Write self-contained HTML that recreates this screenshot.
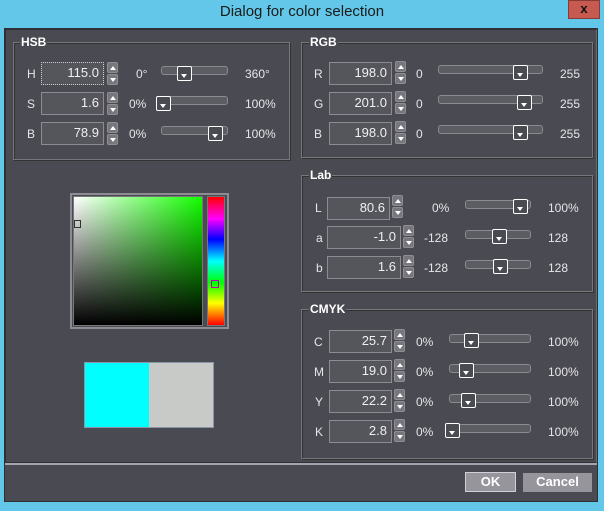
<!DOCTYPE html>
<html><head><meta charset="utf-8"><style>
*{margin:0;padding:0;box-sizing:border-box}
body{width:604px;height:511px;background:#62c7e8;position:relative;overflow:hidden;font-family:"Liberation Sans",sans-serif;font-size:12px;color:#e6e6ea}
div,span{position:absolute}
.title{left:0;top:3px;width:604px;text-align:center;font-size:15px;color:#1b1b1b}
.close{left:568px;top:0;width:32px;height:19px;background:#c75a50;border:1px solid #8a3a34;color:#111;font-weight:bold;font-size:13px;text-align:center;line-height:16px}
.win{left:4px;top:28px;width:594px;height:474px;background:#4a4a52;border:1px solid #2e2e33}
.pan{left:5px;top:29px;width:592px;height:434px;border:1px solid #2f2f34;border-right-color:#6a6a70}
.sep{left:5px;top:463px;width:592px;height:2px;background:#a4a4b0}
.grp{border:1px solid #76767c;box-shadow:inset 1px 1px 0 #333,1px 1px 0 #333}
.gt{font-weight:bold;color:#fff;background:#4a4a52;padding:0 1px;font-size:12px}
.l{width:12px}
.in{height:23px;border:1px solid #8c8c92;background:#55555c;text-align:right;padding-right:4px;line-height:20px;font-size:13px;color:#f0f0f0}
.sp{width:11px;height:11px;background:#76767c;border:1px solid #8e8e94;border-radius:2px}
.sp:after{content:"";position:absolute;left:2px;width:0;height:0;border-left:3px solid transparent;border-right:3px solid transparent}
.up:after{top:3px;border-bottom:4px solid #fff}
.dn:after{top:3px;border-top:4px solid #fff}
.tr{height:9px;background:#5c5c63;border:1px solid #8a8a90;border-radius:3px}
.th{width:15px;height:15px;border:1.5px solid #fff;border-radius:2px;background:#4a4a52}
.th:after{content:"";position:absolute;left:3px;top:7px;border-left:3.5px solid transparent;border-right:3.5px solid transparent;border-top:4px solid #fff}
.t{font-size:12px;line-height:14px}
.btn{height:20px;background:#95959b;color:#fff;font-weight:bold;text-align:center;line-height:18px;font-size:13px}
</style></head><body>
<div class="title">Dialog for color selection</div>
<div class="close">x</div>
<div class="win"></div>
<div class="pan"></div>
<div class="sep"></div>

<!-- HSB -->
<div class="grp" style="left:13px;top:42px;width:277px;height:118px"></div>
<div class="gt" style="left:20px;top:35px">HSB</div>
<span class="t" style="left:27px;top:67px">H</span>
<div class="in" style="left:41px;top:62px;width:63px;border:1px dotted #ccc">115.0</div>
<div class="sp up" style="left:107px;top:62px"></div><div class="sp dn" style="left:107px;top:74px"></div>
<span class="t" style="left:136px;top:67px">0°</span>
<div class="tr" style="left:161px;top:66px;width:67px"></div><div class="th" style="left:177px;top:66px"></div>
<span class="t" style="left:245px;top:67px">360°</span>

<span class="t" style="left:27px;top:97px">S</span>
<div class="in" style="left:41px;top:92px;width:63px">1.6</div>
<div class="sp up" style="left:107px;top:92px"></div><div class="sp dn" style="left:107px;top:104px"></div>
<span class="t" style="left:129px;top:97px">0%</span>
<div class="tr" style="left:161px;top:96px;width:67px"></div><div class="th" style="left:156px;top:96px"></div>
<span class="t" style="left:245px;top:97px">100%</span>

<span class="t" style="left:27px;top:127px">B</span>
<div class="in" style="left:41px;top:122px;width:63px">78.9</div>
<div class="sp up" style="left:107px;top:122px"></div><div class="sp dn" style="left:107px;top:134px"></div>
<span class="t" style="left:129px;top:127px">0%</span>
<div class="tr" style="left:161px;top:126px;width:67px"></div><div class="th" style="left:208px;top:126px"></div>
<span class="t" style="left:245px;top:127px">100%</span>

<!-- RGB -->
<div class="grp" style="left:301px;top:42px;width:292px;height:116px"></div>
<div class="gt" style="left:309px;top:35px">RGB</div>
<span class="t" style="left:314px;top:67px">R</span>
<div class="in" style="left:329px;top:62px;width:63px">198.0</div>
<div class="sp up" style="left:395px;top:61px"></div><div class="sp dn" style="left:395px;top:73px"></div>
<span class="t" style="left:416px;top:67px">0</span>
<div class="tr" style="left:438px;top:65px;width:105px"></div><div class="th" style="left:513px;top:65px"></div>
<span class="t" style="left:560px;top:67px">255</span>

<span class="t" style="left:314px;top:97px">G</span>
<div class="in" style="left:329px;top:92px;width:63px">201.0</div>
<div class="sp up" style="left:395px;top:91px"></div><div class="sp dn" style="left:395px;top:103px"></div>
<span class="t" style="left:416px;top:97px">0</span>
<div class="tr" style="left:438px;top:95px;width:105px"></div><div class="th" style="left:517px;top:95px"></div>
<span class="t" style="left:560px;top:97px">255</span>

<span class="t" style="left:314px;top:127px">B</span>
<div class="in" style="left:329px;top:122px;width:63px">198.0</div>
<div class="sp up" style="left:395px;top:121px"></div><div class="sp dn" style="left:395px;top:133px"></div>
<span class="t" style="left:416px;top:127px">0</span>
<div class="tr" style="left:438px;top:125px;width:105px"></div><div class="th" style="left:513px;top:125px"></div>
<span class="t" style="left:560px;top:127px">255</span>

<!-- Lab -->
<div class="grp" style="left:301px;top:175px;width:292px;height:117px"></div>
<div class="gt" style="left:309px;top:168px">Lab</div>
<span class="t" style="left:315px;top:201px">L</span>
<div class="in" style="left:327px;top:197px;width:63px">80.6</div>
<div class="sp up" style="left:392px;top:195px"></div><div class="sp dn" style="left:392px;top:207px"></div>
<span class="t" style="left:432px;top:201px">0%</span>
<div class="tr" style="left:465px;top:200px;width:66px"></div><div class="th" style="left:513px;top:199px"></div>
<span class="t" style="left:548px;top:201px">100%</span>

<span class="t" style="left:316px;top:231px">a</span>
<div class="in" style="left:327px;top:226px;width:74px">-1.0</div>
<div class="sp up" style="left:403px;top:225px"></div><div class="sp dn" style="left:403px;top:237px"></div>
<span class="t" style="left:424px;top:231px">-128</span>
<div class="tr" style="left:465px;top:230px;width:66px"></div><div class="th" style="left:492px;top:229px"></div>
<span class="t" style="left:548px;top:231px">128</span>

<span class="t" style="left:316px;top:261px">b</span>
<div class="in" style="left:327px;top:256px;width:74px">1.6</div>
<div class="sp up" style="left:403px;top:255px"></div><div class="sp dn" style="left:403px;top:267px"></div>
<span class="t" style="left:424px;top:261px">-128</span>
<div class="tr" style="left:465px;top:260px;width:66px"></div><div class="th" style="left:493px;top:259px"></div>
<span class="t" style="left:548px;top:261px">128</span>

<!-- CMYK -->
<div class="grp" style="left:301px;top:309px;width:292px;height:150px"></div>
<div class="gt" style="left:309px;top:302px">CMYK</div>
<span class="t" style="left:314px;top:335px">C</span>
<div class="in" style="left:329px;top:330px;width:63px">25.7</div>
<div class="sp up" style="left:394px;top:329px"></div><div class="sp dn" style="left:394px;top:341px"></div>
<span class="t" style="left:416px;top:335px">0%</span>
<div class="tr" style="left:449px;top:334px;width:82px"></div><div class="th" style="left:464px;top:333px"></div>
<span class="t" style="left:548px;top:335px">100%</span>

<span class="t" style="left:314px;top:365px">M</span>
<div class="in" style="left:329px;top:360px;width:63px">19.0</div>
<div class="sp up" style="left:394px;top:359px"></div><div class="sp dn" style="left:394px;top:371px"></div>
<span class="t" style="left:416px;top:365px">0%</span>
<div class="tr" style="left:449px;top:364px;width:82px"></div><div class="th" style="left:459px;top:363px"></div>
<span class="t" style="left:548px;top:365px">100%</span>

<span class="t" style="left:315px;top:395px">Y</span>
<div class="in" style="left:329px;top:390px;width:63px">22.2</div>
<div class="sp up" style="left:394px;top:389px"></div><div class="sp dn" style="left:394px;top:401px"></div>
<span class="t" style="left:416px;top:395px">0%</span>
<div class="tr" style="left:449px;top:394px;width:82px"></div><div class="th" style="left:461px;top:393px"></div>
<span class="t" style="left:548px;top:395px">100%</span>

<span class="t" style="left:315px;top:425px">K</span>
<div class="in" style="left:329px;top:420px;width:63px">2.8</div>
<div class="sp up" style="left:394px;top:419px"></div><div class="sp dn" style="left:394px;top:431px"></div>
<span class="t" style="left:416px;top:425px">0%</span>
<div class="tr" style="left:449px;top:424px;width:82px"></div><div class="th" style="left:445px;top:423px"></div>
<span class="t" style="left:548px;top:425px">100%</span>

<!-- picker -->
<div style="left:70px;top:193px;width:159px;height:136px;border:2px solid #8c8c92;background:#4a4a52"></div>
<div style="left:73px;top:196px;width:130px;height:130px;border:1px solid #777;background:linear-gradient(to bottom,rgba(0,0,0,0),#000),linear-gradient(to right,#fff,#13ff00)"></div>
<div style="left:74px;top:220px;width:7px;height:8px;border:1px solid #333"></div>
<div style="left:207px;top:196px;width:18px;height:130px;border:1px solid #777;background:linear-gradient(to bottom,#f00 0%,#f0f 17%,#00f 33%,#0ff 50%,#0f0 67%,#ff0 83%,#f00 100%)"></div>
<div style="left:211px;top:280px;width:8px;height:8px;border:1px solid #c000c0"></div>

<div style="left:84px;top:362px;width:130px;height:66px;border:1px solid #8a96a8;background:#c8cac8"></div>
<div style="left:85px;top:363px;width:64px;height:64px;background:#00ffff"></div>

<div class="btn" style="left:465px;top:472px;width:51px;border:1px solid #d0d0d8">OK</div>
<div class="btn" style="left:523px;top:473px;width:69px;height:19px">Cancel</div>
</body></html>
